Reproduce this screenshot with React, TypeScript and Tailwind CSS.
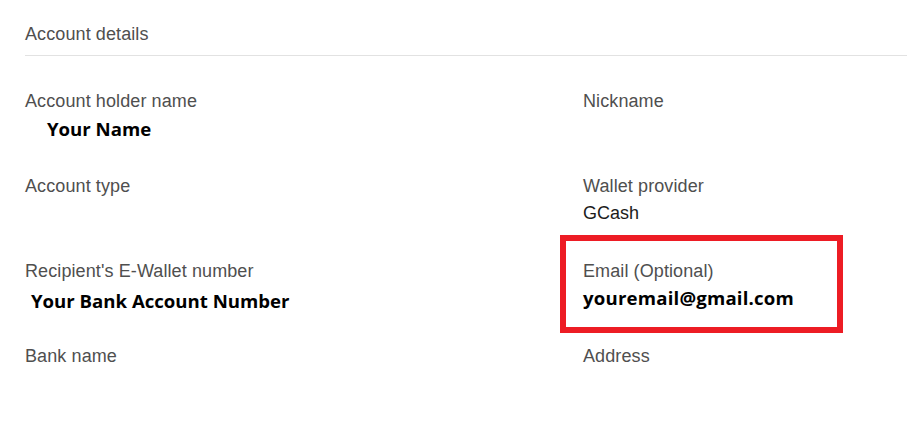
import React from 'react';

const labelCls = "text-[18px] leading-[20px] text-[#4f4f4f] tracking-[0.1px]";
const boldCls = "text-[18.6px] leading-[24px] font-bold text-black";

type Field = {
  label: string;
  value?: React.ReactNode;
};

function Cell({ label, value }: Field) {
  return (
    <div className="h-[85px]">
      <div className={labelCls}>{label}</div>
      {value}
    </div>
  );
}

export default function App() {
  return (
    <div
      className="min-h-screen bg-white pl-[25px]"
      style={{ fontFamily: '"Liberation Sans", Arial, sans-serif' }}
    >
      <div className="pt-[22px] pb-[9px] border-b border-[#e2e2e2]">
        <h2 className={labelCls + " leading-[24px]"}>Account details</h2>
      </div>

      <div className="grid grid-cols-[558px_1fr] pt-[35px]">
        <Cell
          label="Account holder name"
          value={
            <div className={boldCls + " mt-[6px] ml-[22px]"} style={{ fontFamily: '"Open Sans", sans-serif' }}>
              Your Name
            </div>
          }
        />
        <Cell label="Nickname" />

        <Cell label="Account type" />
        <Cell
          label="Wallet provider"
          value={<div className="mt-[5px] text-[18px] leading-[24px] text-[#1c1c1c]">GCash</div>}
        />

        <Cell
          label="Recipient's E-Wallet number"
          value={
            <div className={boldCls + " mt-[8px] ml-[6px]"} style={{ fontFamily: '"Open Sans", sans-serif' }}>
              Your Bank Account Number
            </div>
          }
        />
        <div className="relative h-[85px]">
          <div className="absolute -left-[23px] -top-[26px] w-[283px] h-[98px] border-[6px] border-[#ed1c24]" />
          <div className={labelCls}>Email (Optional)</div>
          <div className={boldCls + " mt-[5px] tracking-[0.2px]"} style={{ fontFamily: '"Open Sans", sans-serif' }}>
            youremail@gmail.com
          </div>
        </div>

        <Cell label="Bank name" />
        <Cell label="Address" />
      </div>
    </div>
  );
}
